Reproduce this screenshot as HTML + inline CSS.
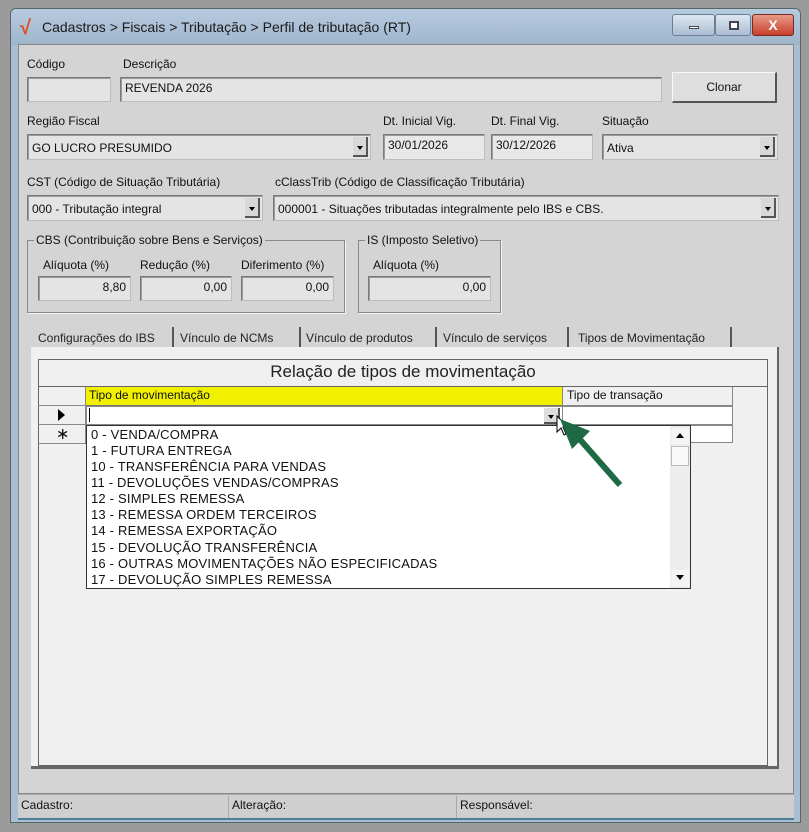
<!DOCTYPE html>
<html><head><meta charset="utf-8"><style>
*{box-sizing:border-box;margin:0;padding:0}
body{width:809px;height:832px;background:#9b9b9b;position:relative;overflow:hidden;font-family:"Liberation Sans Narrow","Liberation Sans",sans-serif;font-size:12px;color:#111}
.a{position:absolute}
.inp{position:absolute;background:#e4e4e4;border:1px solid #7a7a7a;border-right-color:#bdbdbd;border-bottom-color:#bdbdbd;box-shadow:inset 1px 1px 0 #9a9a9a;padding:3px 4px;white-space:nowrap;overflow:hidden}
.dd{position:absolute;right:2px;top:2px;bottom:2px;width:15px;background:#d8d8d8;border-right:2px solid #555;border-bottom:2px solid #555}
.dd:after{content:"";position:absolute;left:4px;top:9px;border-left:3px solid transparent;border-right:3px solid transparent;border-top:4px solid #000}
.r{text-align:right}
.grp{position:absolute;border:1px solid #8a8a8a;box-shadow:1px 1px 0 #f4f4f4}
.grp span{position:absolute;top:-8px;left:6px;background:#d4d4d4;padding:0 2px}
.tab{position:absolute;top:327px;height:22px;padding-top:4px;border-right:2px solid #555;color:#222}
.li{position:absolute;left:4px;font-size:13px;letter-spacing:0.2px}
</style></head><body>
<div class="a" style="left:10px;top:8px;width:791px;height:815px;background:#a9bdd3;border:1px solid #566;border-radius:6px 6px 0 0"></div>
<div class="a" style="left:11px;top:9px;width:789px;height:36px;background:linear-gradient(#b7cbe0,#9fb5cc);border-radius:5px 5px 0 0"></div>
<div class="a" style="left:20px;top:17px;font-size:20px;color:#e04a1c;font-weight:bold;font-family:'Liberation Sans'">&#8730;</div>
<div class="a" style="left:42px;top:19px;font-size:14px;color:#1a1a1a">Cadastros &gt; Fiscais &gt; Tributação &gt; Perfil de tributação (RT)</div>
<div class="a" style="left:672px;top:14px;width:43px;height:22px;border:1px solid #6a7f96;border-radius:3px;background:linear-gradient(#dfe8f2,#aabdd2)"><div class="a" style="left:16px;top:11px;width:10px;height:3px;background:#fff;border:1px solid #445"></div></div>
<div class="a" style="left:715px;top:14px;width:36px;height:22px;border:1px solid #6a7f96;border-radius:3px;background:linear-gradient(#dfe8f2,#aabdd2)"><div class="a" style="left:13px;top:6px;width:10px;height:9px;border:2px solid #445;background:#fff"></div></div>
<div class="a" style="left:752px;top:14px;width:42px;height:22px;border:1px solid #7a2a20;border-radius:3px;background:linear-gradient(#e89a88,#c8402c);color:#fff;font-weight:bold;font-size:14px;text-align:center;line-height:20px;font-family:'Liberation Sans'">X</div>
<div class="a" style="left:18px;top:44px;width:776px;height:750px;background:#d4d4d4;border:1px solid #888"></div>
<div class="a" style="left:27px;top:57px">Código</div>
<div class="a" style="left:123px;top:57px">Descrição</div>
<div class="inp" style="left:27px;top:77px;width:84px;height:25px"></div>
<div class="inp" style="left:120px;top:77px;width:542px;height:25px">REVENDA 2026</div>
<div class="a" style="left:672px;top:72px;width:105px;height:31px;background:#dedede;border:1px solid #f8f8f8;border-right:2px solid #555;border-bottom:2px solid #555;text-align:center;line-height:28px">Clonar</div>
<div class="a" style="left:27px;top:114px">Região Fiscal</div>
<div class="a" style="left:383px;top:114px">Dt. Inicial Vig.</div>
<div class="a" style="left:491px;top:114px">Dt. Final Vig.</div>
<div class="a" style="left:602px;top:114px">Situação</div>
<div class="inp" style="left:27px;top:134px;width:344px;height:26px;padding-top:6px">GO LUCRO PRESUMIDO<div class="dd"></div></div>
<div class="inp" style="left:383px;top:134px;width:102px;height:26px;background:#e8e8e8">30/01/2026</div>
<div class="inp" style="left:491px;top:134px;width:102px;height:26px;background:#e8e8e8">30/12/2026</div>
<div class="inp" style="left:602px;top:134px;width:176px;height:26px;padding-top:6px">Ativa<div class="dd"></div></div>
<div class="a" style="left:27px;top:175px">CST (Código de Situação Tributária)</div>
<div class="a" style="left:275px;top:175px">cClassTrib (Código de Classificação Tributária)</div>
<div class="inp" style="left:27px;top:195px;width:236px;height:26px;padding-top:6px">000 - Tributação integral<div class="dd"></div></div>
<div class="inp" style="left:273px;top:195px;width:506px;height:26px;padding-top:6px">000001 - Situações tributadas integralmente pelo IBS e CBS.<div class="dd"></div></div>
<div class="grp" style="left:27px;top:240px;width:318px;height:73px"><span>CBS (Contribuição sobre Bens e Serviços)</span></div>
<div class="grp" style="left:358px;top:240px;width:143px;height:73px"><span>IS (Imposto Seletivo)</span></div>
<div class="a" style="left:43px;top:258px">Alíquota (%)</div>
<div class="a" style="left:140px;top:258px">Redução (%)</div>
<div class="a" style="left:241px;top:258px">Diferimento (%)</div>
<div class="a" style="left:373px;top:258px">Alíquota (%)</div>
<div class="inp r" style="left:38px;top:276px;width:93px;height:25px">8,80</div>
<div class="inp r" style="left:140px;top:276px;width:92px;height:25px">0,00</div>
<div class="inp r" style="left:241px;top:276px;width:93px;height:25px">0,00</div>
<div class="inp r" style="left:368px;top:276px;width:123px;height:25px">0,00</div>
<div class="tab" style="left:38px;width:136px">Configurações do IBS</div>
<div class="tab" style="left:180px;width:121px">Vínculo de NCMs</div>
<div class="tab" style="left:306px;width:131px">Vínculo de produtos</div>
<div class="tab" style="left:443px;width:126px">Vínculo de serviços</div>
<div class="tab" style="left:578px;width:154px">Tipos de Movimentação</div>
<div class="a" style="left:31px;top:347px;width:748px;height:422px;background:#f0f0f0;border-right:2px solid #666;border-bottom:3px solid #666"></div>
<div class="a" style="left:38px;top:359px;width:730px;height:407px;border:1px solid #666;background:#f0f0f0"></div>
<div class="a" style="left:38px;top:362px;width:730px;text-align:center;font-family:'Liberation Sans';font-size:17px;color:#222">Relação de tipos de movimentação</div>
<div class="a" style="left:38px;top:386px;width:730px;height:1px;background:#666"></div>
<div class="a" style="left:38px;top:387px;width:48px;height:56px;border-right:1px solid #888"></div>
<div class="a" style="left:38px;top:405px;width:695px;height:1px;background:#888"></div>
<div class="a" style="left:86px;top:387px;width:476px;height:19px;background:#f0f000;border-bottom:1px solid #777;padding:1px 3px;font-family:'Liberation Sans';font-size:12px">Tipo de movimentação</div>
<div class="a" style="left:562px;top:387px;width:171px;height:19px;border-left:1px solid #888;border-right:1px solid #888;padding:1px 4px;font-family:'Liberation Sans';font-size:12px">Tipo de transação</div>
<div class="a" style="left:86px;top:406px;width:647px;height:19px;background:#fff;border:1px solid #888"></div>
<div class="a" style="left:562px;top:406px;width:1px;height:37px;background:#888"></div>
<div class="a" style="left:562px;top:425px;width:171px;height:18px;background:#fff;border:1px solid #888"></div>
<div class="a" style="left:89px;top:408px;width:1px;height:14px;background:#000"></div>
<div class="a" style="left:544px;top:408px;width:16px;height:16px;background:#ddd;border-right:2px solid #555;border-bottom:2px solid #555"><div class="a" style="left:4px;top:7px;border-left:3px solid transparent;border-right:3px solid transparent;border-top:4px solid #000"></div></div>
<div class="a" style="left:38px;top:424px;width:48px;height:1px;background:#888"></div>
<div class="a" style="left:38px;top:443px;width:48px;height:1px;background:#888"></div>
<div class="a" style="left:58px;top:409px;border-top:6px solid transparent;border-bottom:6px solid transparent;border-left:7px solid #000"></div>
<div class="a" style="left:56px;top:424px;font-size:16px;font-family:'DejaVu Sans'">&#8727;</div>
<div class="a" style="left:86px;top:425px;width:605px;height:164px;background:#fff;border:1px solid #333;overflow:hidden;font-family:'Liberation Sans Narrow','Liberation Sans',sans-serif">
<div class="li" style="top:1px">0 - VENDA/COMPRA</div>
<div class="li" style="top:17px">1 - FUTURA ENTREGA</div>
<div class="li" style="top:33px">10 - TRANSFERÊNCIA PARA VENDAS</div>
<div class="li" style="top:49px">11 - DEVOLUÇÕES VENDAS/COMPRAS</div>
<div class="li" style="top:65px">12 - SIMPLES REMESSA</div>
<div class="li" style="top:81px">13 - REMESSA ORDEM TERCEIROS</div>
<div class="li" style="top:97px">14 - REMESSA EXPORTAÇÃO</div>
<div class="li" style="top:114px">15 - DEVOLUÇÃO TRANSFERÊNCIA</div>
<div class="li" style="top:130px">16 - OUTRAS MOVIMENTAÇÕES NÃO ESPECIFICADAS</div>
<div class="li" style="top:146px">17 - DEVOLUÇÃO SIMPLES REMESSA</div>
<div class="a" style="left:583px;top:0;width:20px;height:162px;background:#ededed"></div>
<div class="a" style="left:584px;top:2px;width:18px;height:16px;background:#f4f4f4"><div class="a" style="left:5px;top:5px;border-left:4px solid transparent;border-right:4px solid transparent;border-bottom:5px solid #000"></div></div>
<div class="a" style="left:584px;top:20px;width:18px;height:20px;background:#f8f8f8;border:1px solid #bbb"></div>
<div class="a" style="left:584px;top:144px;width:18px;height:16px;background:#f4f4f4"><div class="a" style="left:5px;top:5px;border-left:4px solid transparent;border-right:4px solid transparent;border-top:5px solid #000"></div></div>
</div>
<svg class="a" style="left:540px;top:405px" width="100" height="95" viewBox="0 0 100 95">
<path d="M17 11 L17 27 L21 23 L24 30 L26 29 L23 22 L28 22 Z" fill="#fff" stroke="#000" stroke-width="1"/>
<line x1="80" y1="80" x2="36" y2="30" stroke="#1e6a45" stroke-width="6"/>
<polygon points="20,14 50,26 32,44" fill="#1e6a45"/>
</svg>
<div class="a" style="left:18px;top:794px;width:776px;height:26px;background:#cfcfcf;border-top:1px solid #aaa;border-bottom:2px solid #4d7f9a"></div>
<div class="a" style="left:228px;top:796px;width:1px;height:22px;background:#aaa"></div>
<div class="a" style="left:456px;top:796px;width:1px;height:22px;background:#aaa"></div>
<div class="a" style="left:21px;top:798px">Cadastro:</div>
<div class="a" style="left:232px;top:798px">Alteração:</div>
<div class="a" style="left:460px;top:798px">Responsável:</div>
</body></html>
